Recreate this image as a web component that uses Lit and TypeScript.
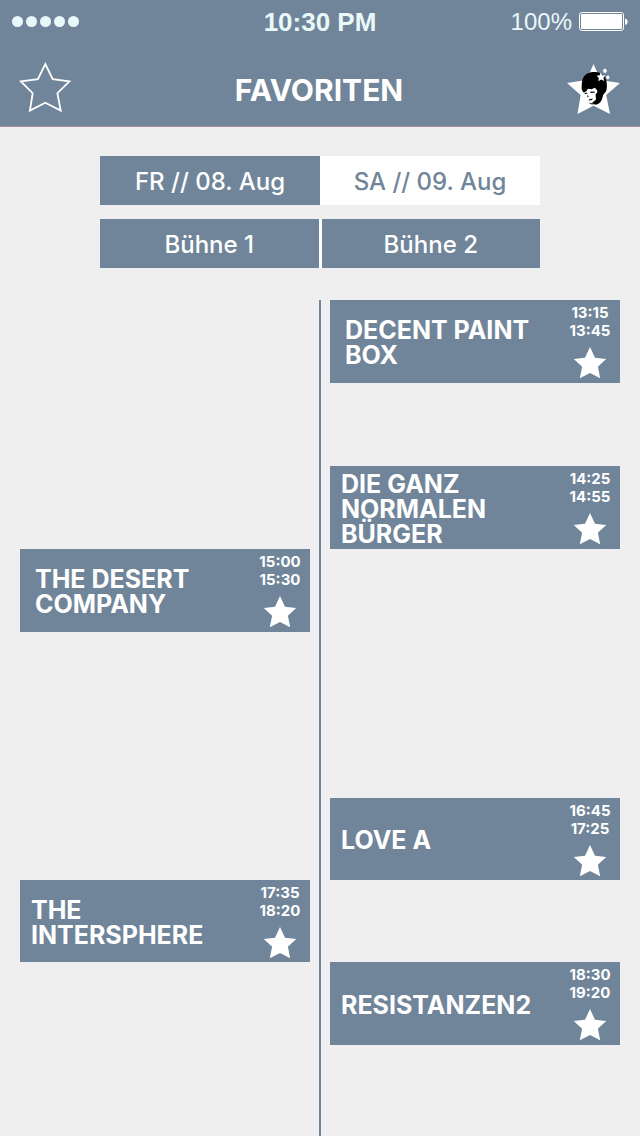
import { LitElement, html, svg, css } from "lit";
import { customElement, property, state } from "lit/decorators.js";
import { classMap } from "lit/directives/class-map.js";

interface Gig {
  id: string;
  name: string;
  start: string;
  end: string;
  stage: 1 | 2;
  slot: number;
  wide?: boolean;
}

const GIGS: Gig[] = [
  { id: "decent", name: "DECENT PAINT BOX", start: "13:15", end: "13:45", stage: 2, slot: 1, wide: true },
  { id: "ganz", name: "DIE GANZ NORMALEN BÜRGER", start: "14:25", end: "14:55", stage: 2, slot: 3 },
  { id: "desert", name: "THE DESERT COMPANY", start: "15:00", end: "15:30", stage: 1, slot: 4, wide: true },
  { id: "love", name: "LOVE A", start: "16:45", end: "17:25", stage: 2, slot: 7 },
  { id: "sphere", name: "THE INTERSPHERE", start: "17:35", end: "18:20", stage: 1, slot: 8 },
  { id: "resi", name: "RESISTANZEN2", start: "18:30", end: "19:20", stage: 2, slot: 9 },
];

const reset = css`
  * {
    box-sizing: border-box;
  }
  button {
    appearance: none;
    border: 0;
    border-radius: 0;
    margin: 0;
    padding: 0;
    background: none;
    color: inherit;
    font: inherit;
    cursor: pointer;
  }
  svg {
    display: block;
  }
`;

@customElement("gig-card")
export class GigCard extends LitElement {
  static styles = [
    reset,
    css`
      :host {
        display: flex;
        justify-content: space-between;
        padding: 0 10px 0 11px;
        background: #708599;
        color: #fff;
        font-family: Inter, "Liberation Sans", sans-serif;
      }
      :host([wide]) {
        padding-left: 15px;
      }
      .name {
        align-self: center;
        max-width: 200px;
        margin: 0;
        padding-top: 3px;
        font-size: 25px;
        line-height: 25px;
        font-weight: 700;
      }
      .side {
        flex: none;
        display: flex;
        flex-direction: column;
        align-items: center;
        width: 40px;
        padding-top: 4px;
      }
      .time {
        font-size: 15px;
        line-height: 18px;
        font-weight: 700;
      }
      .fav {
        margin-top: 7px;
      }
      .off {
        opacity: 0.4;
      }
    `,
  ];

  @property({ attribute: false }) gig!: Gig;
  @state() private fav = true;

  render() {
    const g = this.gig;
    return html`
      <h2 class="name">${g.name}</h2>
      <div class="side">
        <time class="time">${g.start}</time>
        <time class="time">${g.end}</time>
        <button
          class=${classMap({ fav: true, off: !this.fav })}
          aria-label="Favorit"
          aria-pressed=${this.fav}
          @click=${() => (this.fav = !this.fav)}
        >
          <svg width="34" height="32" viewBox="0 0 34 32">
            <path
              fill="#fff"
              d="M17 0 22 10.8 33.2 12 24.9 19.8 27.2 31.2 17 26 6.8 31.2 9.1 19.8.8 12 12 10.8Z"
            />
          </svg>
        </button>
      </div>
    `;
  }
}

const STAR = "M27.300 4 34.700 19.200 51.400 21.300 39.400 33.200 42.700 50.600 27.300 42.700 11.900 50.600 14.700 33.200 2.900 21.300 19.900 19.200Z";

const portrait = svg`
  <path fill="#fff" d="M27.500 4 34.600 20 54 23 40.200 35 44 54 27.500 45.800 11.500 54 14.600 35 1 23 20.600 20Z" />
  <path fill="#000" d="M15.600 29C15.800 25 15.600 20 17.600 17 20 13.400 24 12 28 12c5 0 9.600 1.800 11.600 6.600 1.600 4 1.600 8.400.8 12-.6 2-2.600 3-3.400 4.800-.6 2.400-1 4.600-2.600 6.600-1.600 2-4 3-6.400 2.400L26 43l4-3.400 1.600-4-.4-5.200-2.200-2.600-3.600 1.400-3.400-.4-2 2.600-2 1.200-1-.6Z" />
  <path fill="#000" d="M18.400 33.200l2.600-.6.6 1-2.800.4zM24 31.800l4.200-.4 1 1.200-4.600.4zM21.800 34.600l.8 2.400-1.400.2zM22.600 39.400l4.400-1-1.200 1.700-2.400.5zM29.600 34l2.400-2v6l-2 1.600z" />
  <path fill="#000" d="M22 42.600 26.400 44.800 27 43.400 24 42.900Z" />
  <path fill="#fff" d="M34.600 12.600 36.200 15.200 39.400 15.400 37.400 17.800 38.200 21 35.200 19.600 32.400 21.200 32.800 18 30.600 15.800 33.700 15.300Z" />
  <path fill="#fff" d="M37.400 9 39.800 8.800 41 11 39.600 13 37.200 12.200ZM40.400 16 42.600 15.600 43.600 17.600 42.200 19.400 40.200 18.400Z" />
`;

@customElement("app-root")
export class AppRoot extends LitElement {
  static styles = [
    reset,
    css`
      :host {
        display: flex;
        flex-direction: column;
        min-height: 100vh;
        background: #efefef;
        color: #fff;
        font-family: Inter, "Liberation Sans", sans-serif;
      }
      .top {
        background: #708599;
        border-bottom: 1px solid #b08a9f;
      }
      .status {
        display: grid;
        grid-template-columns: 1fr auto 1fr;
        align-items: center;
        height: 43px;
        padding: 0 12px;
        color: #e9f8f9;
        font-family: "Liberation Sans", Arial, sans-serif;
        font-size: 26px;
        line-height: 28px;
      }
      .dots {
        display: flex;
        gap: 3px;
      }
      .dot {
        width: 11px;
        height: 11px;
        border-radius: 50%;
        background: #e9f8f9;
      }
      .clock {
        font-weight: 700;
      }
      .power {
        display: flex;
        align-items: center;
        justify-content: flex-end;
        gap: 7px;
        font-size: 24px;
      }
      .bar {
        display: grid;
        grid-template-columns: 54px 1fr 54px;
        align-items: center;
        padding: 17px 20px 12px 18px;
      }
      .title {
        margin: 0;
        padding-top: 6px;
        text-align: center;
        font-size: 30px;
        line-height: 36px;
        font-weight: 700;
      }
      .filters {
        display: flex;
        flex-direction: column;
        gap: 14px;
        width: 100%;
        max-width: 480px;
        margin: 29px auto 32px;
        padding: 0 20px;
      }
      .row {
        display: grid;
        grid-template-columns: 1fr 1fr;
      }
      .stages {
        gap: 3px;
        background: #fff;
      }
      .tab {
        height: 49px;
        padding-top: 3px;
        background: #708599;
        color: #fff;
        font-size: 24px;
        line-height: 28px;
        font-weight: 500;
      }
      .light {
        background: #fff;
        color: #708599;
      }
      .plan {
        flex: 1;
        display: grid;
        grid-template-columns: 1fr 2px 1fr;
        grid-template-rows: repeat(6, 83px) repeat(2, 82px) 83px 1fr;
        column-gap: 9px;
        padding: 0 20px;
      }
      .axis {
        grid-area: 1 / 2 / -1 / 3;
        background: #708599;
      }
      .s1 {
        grid-column: 1;
      }
      .s2 {
        grid-column: 3;
      }
    `,
  ];

  @state() private day = 0;

  private dayTab(index: number, label: string) {
    return html`<button
      class=${classMap({ tab: true, light: this.day !== index })}
      aria-pressed=${this.day === index}
      @click=${() => (this.day = index)}
    >
      ${label}
    </button>`;
  }

  render() {
    return html`
      <header class="top">
        <div class="status">
          <div class="dots">${[1, 2, 3, 4, 5].map(() => html`<span class="dot"></span>`)}</div>
          <span class="clock">10:30 PM</span>
          <div class="power">
            <span>100%</span>
            <svg width="49" height="20" viewBox="0 0 49 20">
              <rect x=".5" y=".5" width="44" height="18" rx="2.500" fill="none" stroke="#fff" />
              <rect x="2" y="2" width="41" height="15" rx="1" fill="#fff" />
              <path d="M46 6.500c3.600 1 3.600 5.500 0 6.500Z" fill="#fff" />
            </svg>
          </div>
        </div>
        <div class="bar">
          <button aria-label="Favoriten">
            <svg width="54" height="54" viewBox="0 0 54 54">
              <path d=${STAR} fill="none" stroke="#fff" stroke-width="1.800" />
            </svg>
          </button>
          <h1 class="title">FAVORITEN</h1>
          <button aria-label="Start">
            <svg width="54" height="54" viewBox="0 0 54 54">${portrait}</svg>
          </button>
        </div>
      </header>
      <nav class="filters">
        <div class="row">${this.dayTab(0, "FR // 08. Aug")}${this.dayTab(1, "SA // 09. Aug")}</div>
        <div class="row stages">
          <button class="tab">Bühne 1</button>
          <button class="tab">Bühne 2</button>
        </div>
      </nav>
      <main class="plan">
        <div class="axis"></div>
        ${GIGS.map(
          (g) => html`<gig-card
            class="s${g.stage}"
            style="grid-row:${g.slot}"
            ?wide=${g.wide}
            .gig=${g}
          ></gig-card>`,
        )}
      </main>
    `;
  }
}
